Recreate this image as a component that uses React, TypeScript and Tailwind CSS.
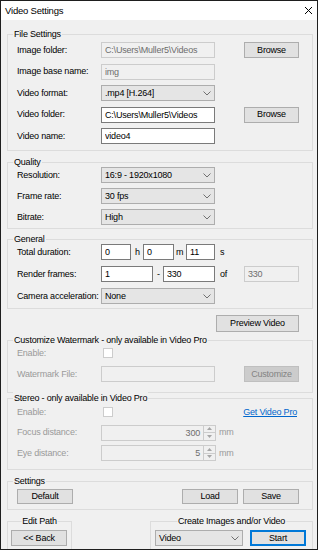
import React from "react";

const FONT = "font-['Liberation_Sans',Arial,sans-serif]";

function Chevron() {
  return (
    <svg width="8" height="5" viewBox="0 0 8 5" className="shrink-0">
      <path d="M0.5 0.5 L4 4 L7.5 0.5" fill="none" stroke="#707070" strokeWidth="1" />
    </svg>
  );
}

function Group({
  label,
  center,
  className,
  children,
}: {
  label: string;
  center?: boolean;
  className?: string;
  children?: React.ReactNode;
}) {
  return (
    <div className={`relative border border-[#dcdcdc] ${className ?? ""}`}>
      <span
        className={`absolute top-[-7px] bg-[#f0f0f0] px-[1px] leading-[13px] whitespace-nowrap ${
          center ? "left-1/2 -translate-x-1/2" : "left-[5px]"
        }`}
      >
        {label}
      </span>
      {children}
    </div>
  );
}

function TextBox({ value, disabled, className }: { value: string; disabled?: boolean; className?: string }) {
  return (
    <input
      readOnly
      disabled={disabled}
      value={value}
      className={`h-4 border px-[3px] py-0 outline-none ${
        disabled ? "bg-[#f0f0f0] border-[#cccccc] text-[#6d6d6d]" : "bg-white border-[#7a7a7a] text-black"
      } ${className ?? ""}`}
    />
  );
}

function Combo({ value, className }: { value: string; className?: string }) {
  return (
    <div
      className={`h-4 flex items-center justify-between border border-[#adadad] bg-[#e5e5e5] pl-[3px] pr-[3px] ${className ?? ""}`}
    >
      <span>{value}</span>
      <Chevron />
    </div>
  );
}

function Btn({
  children,
  className,
  disabled,
  focus,
}: {
  children: React.ReactNode;
  className?: string;
  disabled?: boolean;
  focus?: boolean;
}) {
  return (
    <button
      className={`flex items-center justify-center ${
        disabled
          ? "bg-[#cccccc] border border-[#bfbfbf] text-[#838383]"
          : focus
          ? "bg-[#e1e1e1] border-2 border-[#0078d7]"
          : "bg-[#e1e1e1] border border-[#adadad]"
      } ${className ?? ""}`}
    >
      {children}
    </button>
  );
}

function Check() {
  return <div className="ml-[2px] h-[10px] w-[10px] border border-[#cccccc] bg-white" />;
}

function Arrow({ up }: { up?: boolean }) {
  return (
    <svg width="5" height="3" viewBox="0 0 5 3">
      <path d={up ? "M0 3 L2.5 0 L5 3 Z" : "M0 0 L2.5 3 L5 0 Z"} fill="#a6a6a6" />
    </svg>
  );
}

function Spin({ value }: { value: string }) {
  return (
    <div className="h-4 w-[115px] flex items-stretch border border-[#cccccc] bg-[#f0f0f0]">
      <span className="flex-1 text-right pr-[3px] leading-[14px] text-[#6d6d6d]">{value}</span>
      <div className="w-[12px] flex flex-col">
        <div className="flex-1 flex items-center justify-center border-l border-b border-[#cccccc]">
          <Arrow up />
        </div>
        <div className="flex-1 flex items-center justify-center border-l border-[#cccccc]">
          <Arrow />
        </div>
      </div>
    </div>
  );
}

function Label({ children, muted }: { children: React.ReactNode; muted?: boolean }) {
  return <span className={`w-[84px] shrink-0 whitespace-nowrap ${muted ? "text-[#9a9a9a]" : ""}`}>{children}</span>;
}

export default function App() {
  return (
    <div
      className={`w-[318px] h-[550px] overflow-hidden border border-[#1e1e1e] bg-[#f0f0f0] text-[9px] tracking-[-0.2px] leading-[13px] text-black ${FONT} flex flex-col`}
    >
      <div className="h-[19px] shrink-0 bg-white flex items-center justify-between pl-[4px] pr-[5px]">
        <span className="text-[9.5px]">Video Settings</span>
        <svg width="7" height="7" viewBox="0 0 7 7">
          <path d="M0 0 L7 7 M7 0 L0 7" stroke="#000" strokeWidth="1" />
        </svg>
      </div>

      <div className="flex flex-col pl-[6px] pr-[4px]">
        <Group label="File Settings" className="mt-[14px] h-[117px] pt-[7px] pl-[9px] flex flex-col gap-[5.5px]">
          <div className="h-4 flex items-center">
            <Label>Image folder:</Label>
            <TextBox value="C:\Users\Muller5\Videos" disabled className="w-[114px]" />
            <Btn className="ml-[29px] h-4 w-[55px]">Browse</Btn>
          </div>
          <div className="h-4 flex items-center">
            <Label>Image base name:</Label>
            <TextBox value="img" disabled className="w-[114px]" />
          </div>
          <div className="h-4 flex items-center">
            <Label>Video format:</Label>
            <Combo value=".mp4 [H.264]" className="w-[114px]" />
          </div>
          <div className="h-4 flex items-center">
            <Label>Video folder:</Label>
            <TextBox value="C:\Users\Muller5\Videos" className="w-[114px]" />
            <Btn className="ml-[29px] h-4 w-[55px]">Browse</Btn>
          </div>
          <div className="h-4 flex items-center">
            <Label>Video name:</Label>
            <TextBox value="video4" className="w-[114px]" />
          </div>
        </Group>

        <Group label="Quality" className="mt-[11px] h-[67px] pt-[4px] pl-[9px] flex flex-col gap-[5px]">
          <div className="h-4 flex items-center">
            <Label>Resolution:</Label>
            <Combo value="16:9 - 1920x1080" className="w-[114px]" />
          </div>
          <div className="h-4 flex items-center">
            <Label>Frame rate:</Label>
            <Combo value="30 fps" className="w-[114px]" />
          </div>
          <div className="h-4 flex items-center">
            <Label>Bitrate:</Label>
            <Combo value="High" className="w-[114px]" />
          </div>
        </Group>

        <Group label="General" className="mt-[10px] h-[70px] pt-[4px] pl-[9px] flex flex-col gap-[6px]">
          <div className="h-4 flex items-center">
            <Label>Total duration:</Label>
            <TextBox value="0" className="w-[30px]" />
            <span className="w-[12px] pl-[4px]">h</span>
            <TextBox value="0" className="w-[31px]" />
            <span className="w-[12px] pl-[2px]">m</span>
            <TextBox value="11" className="w-[29px]" />
            <span className="ml-[5px]">s</span>
          </div>
          <div className="h-4 flex items-center">
            <Label>Render frames:</Label>
            <TextBox value="1" className="w-[52px]" />
            <span className="w-[10px] pl-[4px]">-</span>
            <TextBox value="330" className="w-[52px]" />
            <span className="w-[29px] pl-[5px]">of</span>
            <TextBox value="330" disabled className="w-[55px]" />
          </div>
          <div className="h-4 flex items-center">
            <Label>Camera acceleration:</Label>
            <Combo value="None" className="w-[114px]" />
          </div>
        </Group>

        <Btn className="mt-[6px] h-[17px] w-[83px] self-end mr-[14px]">Preview Video</Btn>

        <Group
          label="Customize Watermark - only available in Video Pro"
          className="mt-[8px] h-[53px] pt-[4px] pl-[9px] flex flex-col gap-[5px]"
        >
          <div className="h-4 flex items-center">
            <Label muted>Enable:</Label>
            <Check />
          </div>
          <div className="h-4 flex items-center">
            <Label muted>Watermark File:</Label>
            <TextBox value="" disabled className="w-[114px]" />
            <Btn disabled className="ml-[29px] h-4 w-[55px]">
              Customize
            </Btn>
          </div>
        </Group>

        <Group
          label="Stereo - only available in Video Pro"
          className="mt-[5px] h-[72px] pt-[5px] pl-[9px] flex flex-col gap-[4.5px]"
        >
          <div className="h-4 flex items-center pr-[15px]">
            <Label muted>Enable:</Label>
            <Check />
            <a href="#" className="ml-auto text-[#0066cc] underline">
              Get Video Pro
            </a>
          </div>
          <div className="h-4 flex items-center">
            <Label muted>Focus distance:</Label>
            <Spin value="300" />
            <span className="ml-[3px] text-[#9a9a9a]">mm</span>
          </div>
          <div className="h-4 flex items-center">
            <Label muted>Eye distance:</Label>
            <Spin value="5" />
            <span className="ml-[3px] text-[#9a9a9a]">mm</span>
          </div>
        </Group>

        <Group label="Settings" className="mt-[11px] h-[29px] pt-[7px] pl-[9px] pr-[13px] flex items-start">
          <Btn className="h-[15px] w-[56px]">Default</Btn>
          <div className="ml-auto flex gap-[5px]">
            <Btn className="h-[15px] w-[56px]">Load</Btn>
            <Btn className="h-[15px] w-[56px]">Save</Btn>
          </div>
        </Group>

        <div className="mt-[11px] flex justify-between">
          <Group label="Edit Path" center className="w-[65px] h-[40px] pt-[8px] pl-[3px]">
            <Btn className="h-4 w-[56px]">&lt;&lt; Back</Btn>
          </Group>
          <Group label="Create Images and/or Video" center className="w-[163px] h-[40px] pt-[8px] pl-[4px] flex items-start">
            <Combo value="Video" className="w-[88px]" />
            <Btn focus className="ml-[7px] h-4 w-[56px]">
              Start
            </Btn>
          </Group>
        </div>
      </div>
    </div>
  );
}
